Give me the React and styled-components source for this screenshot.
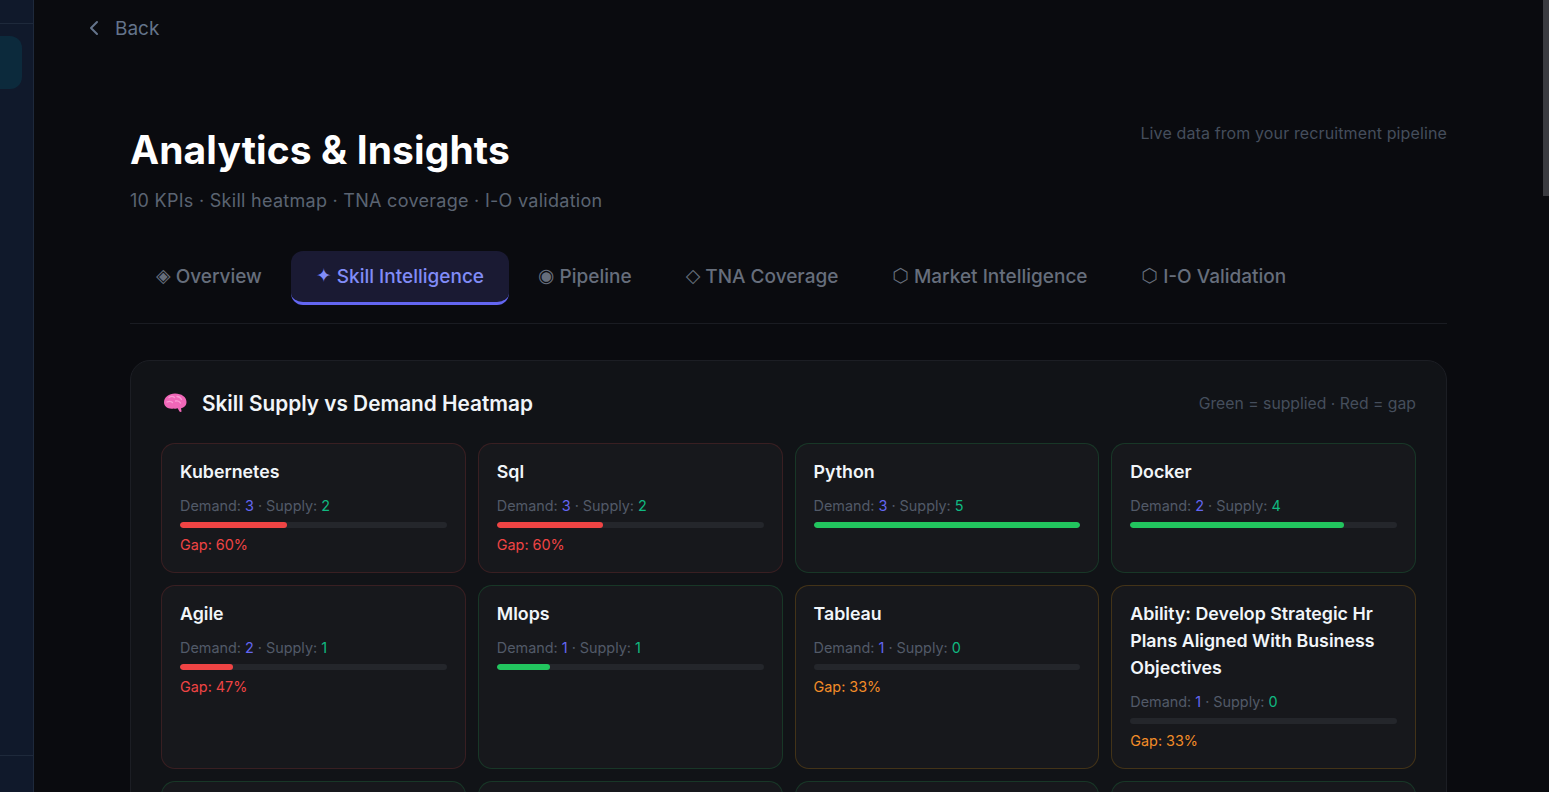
import React from 'react';
import styled, { createGlobalStyle } from 'styled-components';
import { ChevronLeft } from 'lucide-react';

const GlobalStyle = createGlobalStyle`
  html, body {
    margin: 0;
    height: 100%;
    background: #0a0b0f;
    overflow: hidden;
  }
  * {
    box-sizing: border-box;
  }
`

const Shell = styled.div`
  position: relative;
  display: flex;
  height: 792px;
  overflow: hidden;
  font-family: Inter, 'Liberation Sans', sans-serif;
  background: #0a0b0f;
`

/* Sidebar */

const Sidebar = styled.aside`
  flex: 0 0 34px;
  display: flex;
  flex-direction: column;
  background: #10192b;
  border-right: 1px solid #1e293b;
`

const SidebarHead = styled.div`
  height: 24px;
  border-bottom: 1px solid #1e293b;
`

const SidebarNav = styled.div`
  flex: 1;
  padding: 12px 11px 0 0;
`

const ActiveItem = styled.div`
  height: 53px;
  background: #0c2a3c;
  border-radius: 0 12px 12px 0;
`

const SidebarFoot = styled.div`
  height: 37px;
  border-top: 1px solid #1e293b;
`

/* Main */

const Main = styled.main`
  flex: 1;
  min-width: 0;
`

const BackLink = styled.div`
  display: flex;
  align-items: center;
  gap: 9px;
  height: 56px;
  padding-left: 48px;
  color: #64748b;
  font-size: 19px;
`

const Content = styled.div`
  padding: 0 102px 0 96px;
`

const Header = styled.div`
  display: flex;
  justify-content: space-between;
  align-items: flex-start;
  margin-top: 51px;
`

const Title = styled.h1`
  margin: 19px 0 0;
  color: #fff;
  font-size: 39px;
  line-height: 48px;
  font-weight: 700;
  letter-spacing: 0.1px;
`

const Subtitle = styled.p`
  margin: 15px 0 0;
  color: #5b6472;
  font-size: 18px;
  line-height: 24px;
  letter-spacing: 0.28px;
`

const LiveNote = styled.div`
  margin-top: 16px;
  color: #454e5c;
  font-size: 16px;
  line-height: 20px;
  letter-spacing: 0.12px;
`

/* Tabs */

const Tabs = styled.div`
  display: flex;
  gap: 4px;
  margin-top: 38px;
  padding: 0 0 18px 1px;
  border-bottom: 1px solid #1a1c22;
`

const Tab = styled.div`
  display: flex;
  align-items: center;
  gap: 5px;
  height: 54px;
  padding: 0 25px;
  border-radius: 12px;
  font-size: 19px;
  font-weight: 500;
  color: ${(p) => (p.$active ? '#818cf8' : '#666e7c')};
  background: ${(p) => (p.$active ? '#1a1a33' : 'transparent')};
  border-bottom: 3px solid ${(p) => (p.$active ? '#6366f1' : 'transparent')};
`

const TabGlyph = styled.span`
  margin-bottom: 3px;
  font-family: 'DejaVu Sans', sans-serif;
  font-size: 19px;
`

/* Panel */

const Panel = styled.section`
  margin-top: 36px;
  padding: 24px 30px 0;
  height: 500px;
  background: #111317;
  border: 1px solid #1c1e24;
  border-radius: 20px;
`

const PanelHead = styled.div`
  display: flex;
  align-items: center;
  justify-content: space-between;
  height: 36px;
  margin-bottom: 22px;
`

const PanelTitle = styled.h2`
  display: flex;
  align-items: center;
  gap: 15px;
  margin: 0 0 0 2px;
  color: #f1f5f9;
  font-size: 20.8px;
  font-weight: 600;
`

const Legend = styled.div`
  color: #454e5c;
  font-size: 15.75px;
`

const Grid = styled.div`
  display: grid;
  grid-template-columns: repeat(4, 1fr);
  gap: 12px;
`

const borderTones = {
  red: 'rgba(239, 68, 68, 0.16)',
  green: 'rgba(34, 197, 94, 0.18)',
  orange: 'rgba(245, 158, 11, 0.2)',
}

const Card = styled.div`
  padding: 13.5px 18px 17.5px;
  background: #17181c;
  border: 1px solid ${(p) => borderTones[p.$tone]};
  border-radius: 14px;
`

const CardTitle = styled.div`
  color: #f1f5f9;
  font-size: 17.8px;
  line-height: 27px;
  font-weight: 600;
`

const Meta = styled.div`
  margin-top: 11px;
  color: #525a68;
  font-size: 14.4px;
  line-height: 20px;
`

const Demand = styled.span`
  color: #6366f1;
`

const Supply = styled.span`
  color: #10b981;
`

const Track = styled.div`
  height: 6px;
  margin-top: 6px;
  background: #24262b;
  border-radius: 3px;
  overflow: hidden;
`

const Fill = styled.div`
  height: 100%;
  border-radius: 3px;
  background: ${(p) => (p.$gap ? '#ef4444' : '#22c55e')};
`

const GapText = styled.div`
  margin-top: 7px;
  font-size: 14.4px;
  line-height: 20px;
  color: ${(p) => (p.$tone === 'orange' ? '#f28c28' : '#ef4444')};
`

const ScrollThumb = styled.div`
  position: absolute;
  top: 0;
  right: 0;
  width: 6px;
  height: 196px;
  background: #3a3b40;
`

const tabs = [
  ['◈', 'Overview'],
  ['✦', 'Skill Intelligence'],
  ['◉', 'Pipeline'],
  ['◇', 'TNA Coverage'],
  ['⬡', 'Market Intelligence'],
  ['⬡', 'I-O Validation'],
]

const skills = [
  { name: 'Kubernetes', demand: 3, supply: 2, fill: 40, tone: 'red', gap: 60 },
  { name: 'Sql', demand: 3, supply: 2, fill: 40, tone: 'red', gap: 60 },
  { name: 'Python', demand: 3, supply: 5, fill: 100, tone: 'green' },
  { name: 'Docker', demand: 2, supply: 4, fill: 80, tone: 'green' },
  { name: 'Agile', demand: 2, supply: 1, fill: 20, tone: 'red', gap: 47 },
  { name: 'Mlops', demand: 1, supply: 1, fill: 20, tone: 'green' },
  { name: 'Tableau', demand: 1, supply: 0, fill: 0, tone: 'orange', gap: 33 },
  { name: 'Ability: Develop Strategic Hr Plans Aligned With Business Objectives', demand: 1, supply: 0, fill: 0, tone: 'orange', gap: 33 },
]

function BrainIcon() {
  return (
    <svg width="24" height="20" viewBox="0 0 24 20">
      <path
        d="M1 9.500C1 4 6 .5 12 .5c6.500 0 11.500 3.500 11.500 8.500 0 3.600-2.600 5.800-5.500 6.200l.6 3.300c-.7.700-1.800.5-2.300-.2l-1.600-3c-1.400.5-2.800.5-4 .1C6 16.500 1 14 1 9.500Z"
        fill="#f067b8"
      />
      <path
        d="M6 4.500c2-1.500 4-1.500 5.500 0M14 3.500c2 0 3.500 1 4.500 3M4 9c2-1 4-.8 5.500.5M12.500 8c2-.5 4 0 5 2"
        fill="none"
        stroke="#fa9ad4"
        strokeWidth="1.300"
        strokeLinecap="round"
      />
    </svg>
  )
}

function SkillCard({ skill }) {
  return (
    <Card $tone={skill.tone}>
      <CardTitle>{skill.name}</CardTitle>
      <Meta>
        Demand: <Demand>{skill.demand}</Demand> · Supply: <Supply>{skill.supply}</Supply>
      </Meta>
      <Track>
        <Fill $gap={skill.gap} style={{ width: `${skill.fill}%` }} />
      </Track>
      {skill.gap && <GapText $tone={skill.tone}>Gap: {skill.gap}%</GapText>}
    </Card>
  )
}

export default function App() {
  return (
    <Shell>
      <GlobalStyle />
      <Sidebar>
        <SidebarHead />
        <SidebarNav>
          <ActiveItem />
        </SidebarNav>
        <SidebarFoot />
      </Sidebar>
      <Main>
        <BackLink>
          <ChevronLeft size={24} strokeWidth={2} />
          Back
        </BackLink>
        <Content>
          <Header>
            <div>
              <Title>Analytics &amp; Insights</Title>
              <Subtitle>10 KPIs · Skill heatmap · TNA coverage · I-O validation</Subtitle>
            </div>
            <LiveNote>Live data from your recruitment pipeline</LiveNote>
          </Header>
          <Tabs>
            {tabs.map(([glyph, label], i) => (
              <Tab key={label} $active={i === 1}>
                <TabGlyph>{glyph}</TabGlyph>
                {label}
              </Tab>
            ))}
          </Tabs>
          <Panel>
            <PanelHead>
              <PanelTitle>
                <BrainIcon />
                Skill Supply vs Demand Heatmap
              </PanelTitle>
              <Legend>Green = supplied · Red = gap</Legend>
            </PanelHead>
            <Grid>
              {skills.map((skill) => (
                <SkillCard key={skill.name} skill={skill} />
              ))}
              <Card $tone="green" />
              <Card $tone="green" />
              <Card $tone="green" />
              <Card $tone="green" />
            </Grid>
          </Panel>
        </Content>
      </Main>
      <ScrollThumb />
    </Shell>
  )
}
